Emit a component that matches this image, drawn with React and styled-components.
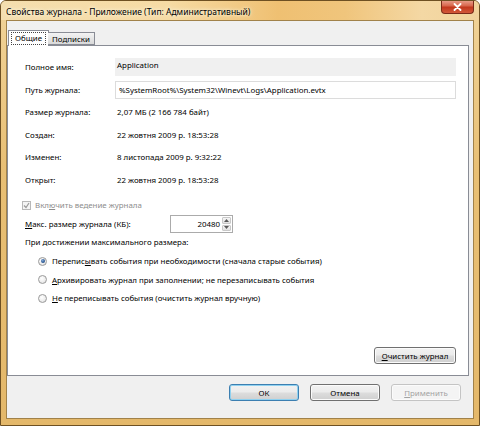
import React from "react";
import styled, { createGlobalStyle } from "styled-components";

const GlobalStyle = createGlobalStyle`
  html, body {
    margin: 0;
    padding: 0;
    background: #ffffff;
  }
  * {
    box-sizing: border-box;
  }
`;

const FONT = `"Noto Sans", "Liberation Sans", sans-serif`;
const SIZE = "7.9px";

const Window = styled.div`
  width: 480px;
  height: 426px;
  display: flex;
  flex-direction: column;
  border: 1px solid #6e5022;
  border-radius: 6px 6px 0 0;
  background: linear-gradient(180deg, #f1d49a 0%, #e8bf74 40%, #e4b86a 100%);
  overflow: hidden;
  font-family: ${FONT};
`;

const TitleBar = styled.div`
  height: 19px;
  display: flex;
  justify-content: space-between;
  align-items: flex-start;
  padding-left: 5px;
  padding-right: 5px;
  background: linear-gradient(90deg, #f4deaf 0%, #f6dba4 35%, #efc072 58%, #f0c57c 72%, #f4d8a4 88%, #f1d39c 100%);
`;

const TitleText = styled.span`
  font-size: 8.5px;
  line-height: 21px;
  color: #000;
  text-shadow: 0 0 5px #fff6e0, 0 0 3px #fff6e0;
  white-space: nowrap;
`;

const CloseButton = styled.div`
  width: 33px;
  height: 14px;
  margin-top: -1px;
  display: flex;
  align-items: center;
  justify-content: center;
  border: 1px solid #7a2a18;
  border-top: none;
  border-radius: 0 0 4px 4px;
  background: linear-gradient(180deg, #eba592 0%, #d8664c 45%, #c2381d 55%, #d2583a 100%);
`;

const Client = styled.div`
  flex: 1;
  margin: 0 5px 6px 5px;
  display: flex;
  flex-direction: column;
  padding: 9px 4px 0 0;
  background: #f0f0f0;
  border: 1px solid #a1824a;
`;

const TabStrip = styled.div`
  display: flex;
  align-items: flex-end;
  height: 15px;
  padding-left: 1px;
  position: relative;
  z-index: 1;
`;

const Tab = styled.div`
  height: ${(p) => (p.$active ? "16px" : "13px")};
  margin-bottom: ${(p) => (p.$active ? "-1px" : "0")};
  padding: 0 ${(p) => (p.$active ? "2px" : "4px")};
  display: flex;
  align-items: center;
  font-size: ${SIZE};
  color: #000;
  border: 1px solid #898c95;
  border-bottom: ${(p) => (p.$active ? "none" : "1px solid #898c95")};
  margin-left: ${(p) => (p.$active ? "0" : "-1px")};
  border-left: ${(p) => (p.$active ? "1px solid #898c95" : "none")};
  background: ${(p) =>
    p.$active ? "#ffffff" : "linear-gradient(180deg, #f3f3f3 0%, #e6e6e6 50%, #d9d9d9 100%)"};
`;

const FocusLabel = styled.span`
  border: 1px dotted #444;
  padding: 0 3px;
  line-height: 11px;
`;

const Panel = styled.div`
  height: 331px;
  display: flex;
  flex-direction: column;
  padding: 10px 12px 11px 17px;
  background: #ffffff;
  border: 1px solid #898c95;
`;

const InfoGrid = styled.div`
  display: grid;
  grid-template-columns: 90px 1fr;
  grid-auto-rows: 22.5px;
  align-items: center;
  font-size: ${SIZE};
  color: #000;
`;

const Label = styled.span`
  color: ${(p) => (p.$disabled ? "#8d8d8d" : "#000")};
  white-space: nowrap;
`;

const Value = styled.span`
  padding-left: 2px;
  white-space: nowrap;
`;

const Field = styled.div`
  height: 18px;
  display: flex;
  align-items: center;
  padding-left: ${(p) => (p.$readonly ? "1px" : "3px")};
  padding-bottom: ${(p) => (p.$readonly ? "4px" : "0")};
  background: ${(p) => (p.$readonly ? "#f0f0f0" : "#ffffff")};
  border: 1px solid ${(p) => (p.$readonly ? "#f0f0f0" : "#dcdcdc")};
  white-space: nowrap;
`;

const CheckRow = styled.div`
  display: flex;
  align-items: center;
  gap: 4px;
  height: 14px;
  margin: 7px 0 0 -3px;
  font-size: ${SIZE};
`;

const CheckBox = styled.span`
  width: 9px;
  height: 9px;
  display: flex;
  align-items: center;
  justify-content: center;
  border: 1px solid #b8b8b8;
  background: #f4f4f4;
`;

const SizeRow = styled.div`
  display: flex;
  align-items: center;
  height: 18px;
  margin-top: 3px;
  font-size: ${SIZE};
`;

const SizeLabel = styled.span`
  width: 145px;
`;

const Spinner = styled.div`
  width: 63px;
  height: 18px;
  display: flex;
  align-items: center;
  border: 1px solid #ababab;
  background: #fff;
`;

const SpinValue = styled.span`
  flex: 1;
  text-align: right;
  padding-right: 2px;
`;

const SpinButtons = styled.div`
  width: 10px;
  height: 100%;
  display: flex;
  flex-direction: column;
  gap: 1px;
  padding: 1px 1px 1px 0;
`;

const SpinArrow = styled.div`
  flex: 1;
  display: flex;
  align-items: center;
  justify-content: center;
  border: 1px solid #c8c8c8;
  border-radius: 1px;
  background: linear-gradient(180deg, #f6f6f6, #e2e2e2);
`;

const Caption = styled.div`
  height: 14px;
  display: flex;
  align-items: center;
  margin-top: 2px;
  font-size: ${SIZE};
`;

const RadioGroup = styled.div`
  display: flex;
  flex-direction: column;
  margin: 3px 0 0 13px;
`;

const RadioRow = styled.div`
  height: 18.5px;
  display: flex;
  align-items: center;
  gap: 5px;
  font-size: ${SIZE};
  white-space: nowrap;
`;

const Radio = styled.span`
  width: 9px;
  height: 9px;
  border-radius: 50%;
  display: flex;
  align-items: center;
  justify-content: center;
  border: 1px solid #9a9a9a;
  background: radial-gradient(circle at 40% 35%, #ffffff 0%, #ececec 60%, #d4d4d4 100%);

  &::after {
    content: "";
    width: 4px;
    height: 4px;
    border-radius: 50%;
    display: ${(p) => (p.$checked ? "block" : "none")};
    background: radial-gradient(circle at 40% 35%, #7fa6d6 0%, #2d5a94 60%, #1b3c6b 100%);
  }
`;

const PanelFooter = styled.div`
  margin-top: auto;
  display: flex;
  justify-content: flex-end;
`;

const Button = styled.button`
  width: ${(p) => p.$width || "70px"};
  height: 17px;
  padding: 0;
  font-family: ${FONT};
  font-size: ${SIZE};
  color: ${(p) => (p.disabled ? "#a3a3a3" : "#000")};
  border: 1px solid ${(p) => (p.disabled ? "#c4c4c4" : p.$default ? "#3c7fb1" : "#707070")};
  border-radius: 3px;
  box-shadow: ${(p) => (p.$default ? "inset 0 0 0 1px #8fd1f0" : "inset 0 0 0 1px #fbfbfb")};
  background: ${(p) =>
    p.disabled
      ? "#f4f4f4"
      : "linear-gradient(180deg, #f2f2f2 0%, #ebebeb 48%, #dddddd 52%, #cfcfcf 100%)"};
`;

const ButtonBar = styled.div`
  display: flex;
  justify-content: flex-end;
  gap: 11px;
  padding: 8px 8px 0 0;
`;

const Key = styled.span`
  text-decoration: underline;
`;

const infoRows = [
  ["Размер журнала:", "2,07 МБ (2 166 784 байт)"],
  ["Создан:", "22 жовтня 2009 р. 18:53:28"],
  ["Изменен:", "8 листопада 2009 р. 9:32:22"],
  ["Открыт:", "22 жовтня 2009 р. 18:53:28"],
];

export default function App() {
  return (
    <>
      <GlobalStyle />
      <Window>
        <TitleBar>
          <TitleText>Свойства журнала - Приложение (Тип: Административный)</TitleText>
          <CloseButton>
            <svg width="9" height="8" viewBox="0 0 9 8">
              <path d="M1.5 1 L7.5 7 M7.5 1 L1.5 7" stroke="#ffffff" strokeWidth="1.8" strokeLinecap="round" />
            </svg>
          </CloseButton>
        </TitleBar>
        <Client>
          <TabStrip>
            <Tab $active>
              <FocusLabel>Общие</FocusLabel>
            </Tab>
            <Tab>Подписки</Tab>
          </TabStrip>
          <Panel>
            <InfoGrid>
              <Label>Полное имя:</Label>
              <Field $readonly>Application</Field>
              <Label>Путь журнала:</Label>
              <Field>%SystemRoot%\System32\Winevt\Logs\Application.evtx</Field>
              {infoRows.map(([label, value]) => (
                <React.Fragment key={label}>
                  <Label>{label}</Label>
                  <Value>{value}</Value>
                </React.Fragment>
              ))}
            </InfoGrid>

            <CheckRow>
              <CheckBox>
                <svg width="7" height="7" viewBox="0 0 7 7">
                  <path d="M1 3.5 L3 5.5 L6 1" fill="none" stroke="#9a9a9a" strokeWidth="1.2" />
                </svg>
              </CheckBox>
              <Label $disabled>
                Вкл<Key>ю</Key>чить ведение журнала
              </Label>
            </CheckRow>

            <SizeRow>
              <SizeLabel>
                <Key>М</Key>акс. размер журнала (КБ):
              </SizeLabel>
              <Spinner>
                <SpinValue>20480</SpinValue>
                <SpinButtons>
                  <SpinArrow>
                    <svg width="5" height="3" viewBox="0 0 5 3">
                      <path d="M0 3 L2.5 0 L5 3 Z" fill="#5a5a5a" />
                    </svg>
                  </SpinArrow>
                  <SpinArrow>
                    <svg width="5" height="3" viewBox="0 0 5 3">
                      <path d="M0 0 L2.5 3 L5 0 Z" fill="#5a5a5a" />
                    </svg>
                  </SpinArrow>
                </SpinButtons>
              </Spinner>
            </SizeRow>

            <Caption>При достижении максимального размера:</Caption>

            <RadioGroup>
              <RadioRow>
                <Radio $checked />
                <span>
                  Перепис<Key>ы</Key>вать события при необходимости (сначала старые события)
                </span>
              </RadioRow>
              <RadioRow>
                <Radio />
                <span>
                  <Key>А</Key>рхивировать журнал при заполнении; не перезаписывать события
                </span>
              </RadioRow>
              <RadioRow>
                <Radio />
                <span>
                  <Key>Н</Key>е переписывать события (очистить журнал вручную)
                </span>
              </RadioRow>
            </RadioGroup>

            <PanelFooter>
              <Button $width="82px">
                <Key>О</Key>чистить журнал
              </Button>
            </PanelFooter>
          </Panel>
          <ButtonBar>
            <Button $default>ОК</Button>
            <Button>Отмена</Button>
            <Button disabled>
              <Key>П</Key>рименить
            </Button>
          </ButtonBar>
        </Client>
      </Window>
    </>
  );
}
